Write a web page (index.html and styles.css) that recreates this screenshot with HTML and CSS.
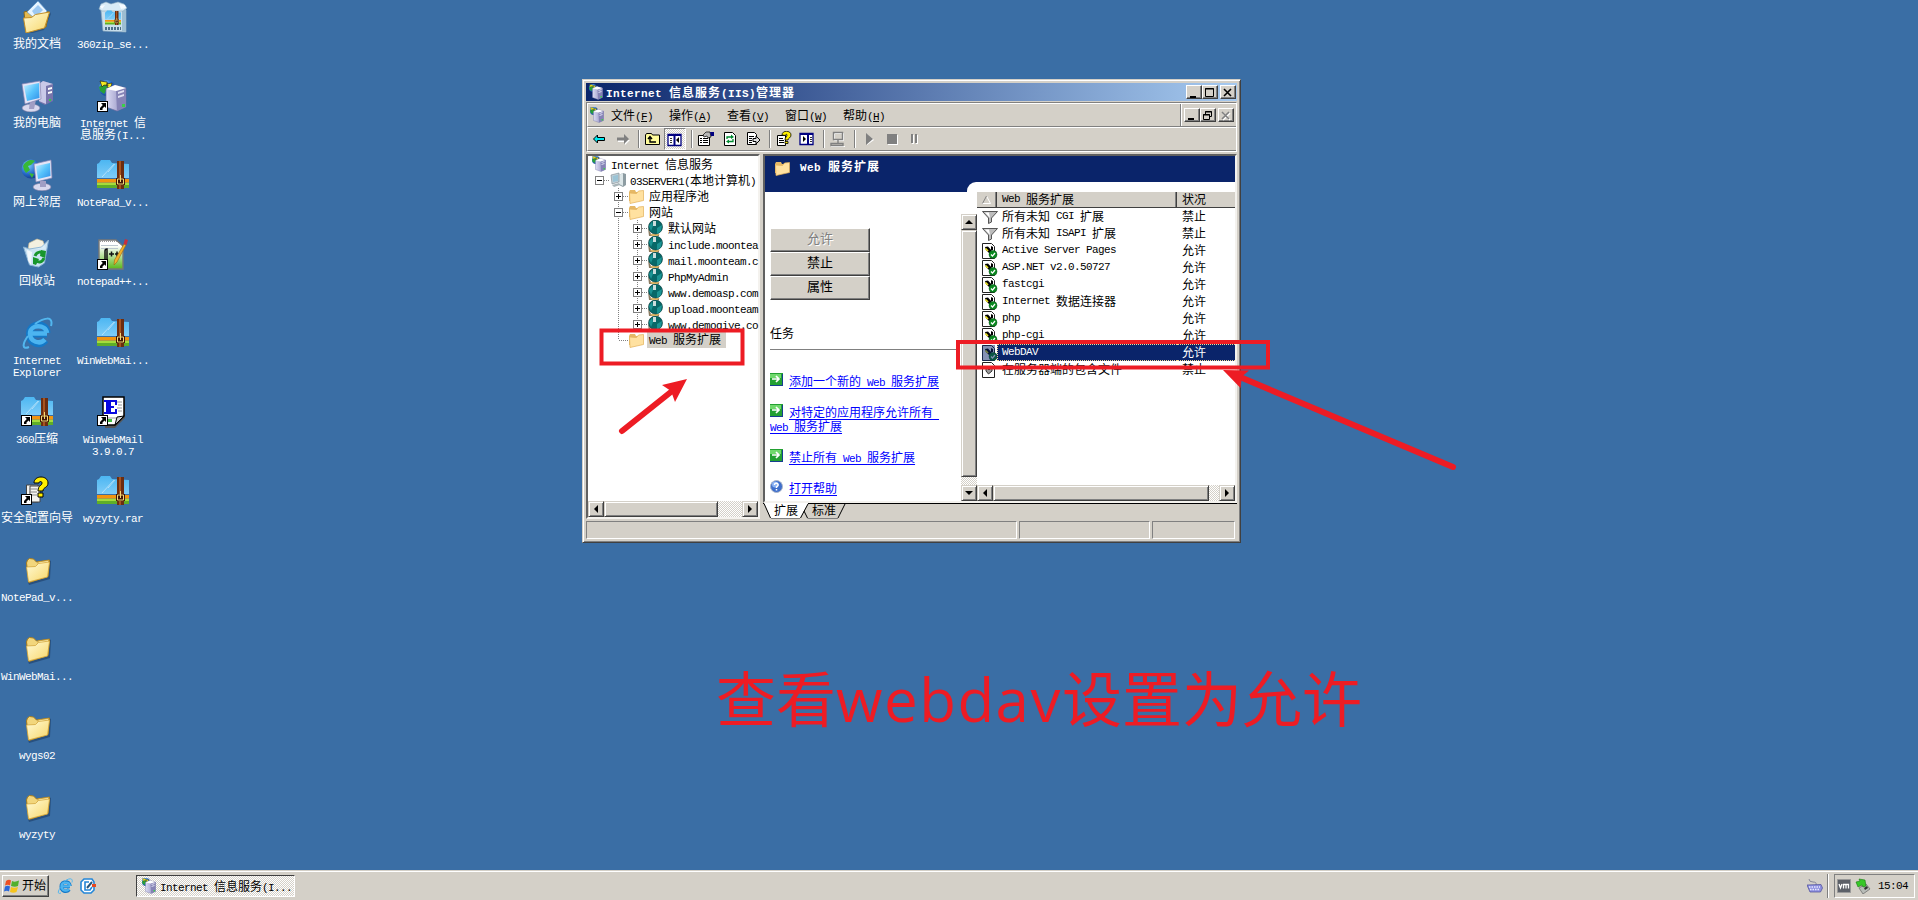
FILE: index.html
```html
<!DOCTYPE html>
<html lang="zh-CN">
<head>
<meta charset="utf-8">
<title>Internet 信息服务(IIS)管理器</title>
<link rel="stylesheet" href="styles.css">
</head>
<body>
<svg class="defs" width="0" height="0">
<defs>
<linearGradient id="gScreen" x1="0" y1="0" x2="1" y2="1"><stop offset="0" stop-color="#c8f0ff"/><stop offset=".5" stop-color="#58c4fc"/><stop offset="1" stop-color="#2f8fe8"/></linearGradient>
<linearGradient id="gFolder" x1="0" y1="0" x2="1" y2="1"><stop offset="0" stop-color="#fffbd8"/><stop offset="1" stop-color="#f8d668"/></linearGradient>
<linearGradient id="gBlue" x1="0" y1="0" x2="0" y2="1"><stop offset="0" stop-color="#4cb6f2"/><stop offset="1" stop-color="#7fcdf8"/></linearGradient>
<linearGradient id="gTower" x1="0" y1="0" x2="1" y2="0"><stop offset="0" stop-color="#dcdcf4"/><stop offset="1" stop-color="#8684b8"/></linearGradient>
<radialGradient id="gGlobe" cx=".35" cy=".3" r=".8"><stop offset="0" stop-color="#7fd0ff"/><stop offset=".6" stop-color="#2468c8"/><stop offset="1" stop-color="#10307c"/></radialGradient>
<linearGradient id="gPaper" x1="0" y1="0" x2="0" y2="1"><stop offset=".2" stop-color="#fff"/><stop offset="1" stop-color="#58b818"/></linearGradient>
<symbol id="lnk" viewBox="0 0 11 11"><path d="M0 0h11v11H0z"/><path fill="#fff" d="M1 1h9v9H1z"/><path d="M4 2h5v5L7.500 5.600 5.500 7.500V9H3V7l2.800-3z"/></symbol>
<symbol id="folder" viewBox="0 0 32 32"><path fill="#1c3c66" opacity=".6" d="M7 28l20-5 1-17 2 1-1 18L8 31z"/><path fill="#f2d67c" stroke="#a97d1c" d="M5.500 9l1-3 2-1.500 4 .5 3 3 13-2-1.500 16.500-19 6z"/><path fill="#fff2b4" stroke="#c79a34" stroke-width=".8" d="M17 8l10.500-1.500V12l-10 1z"/><path fill="url(#gFolder)" stroke="#d3a63c" stroke-width=".8" d="M5.500 13l9-.5 3-3 11-1.500-2 15-19 5z"/></symbol>
<symbol id="docs" viewBox="0 0 32 32"><path fill="#1c3c66" opacity=".5" d="M5 31l16-4 8-16 1 2-7 16-15 4z"/><path fill="#e5b94e" stroke="#8d6a18" d="M3 11l8-2 17 2-3 15-20 4z"/><path fill="#e8f5ff" stroke="#5f97cc" stroke-width=".7" d="M6 11L17 0l9 10-7 12z"/><path fill="#9cc8f2" d="M11 10l6-6 5 5-7 7z"/><path fill="url(#gFolder)" stroke="#c48f28" d="M2.500 17l8-.5 4-3 14-2.500-5 16-18.500 5z"/></symbol>
<symbol id="tower" viewBox="0 0 32 32"><path fill="url(#gTower)" stroke="#6b6aa0" stroke-width=".7" d="M9 9l9-4 11 3v19l-9 4-11-4z"/><path fill="#8583b6" d="M19 11l10-3v19l-9 4z"/><path fill="#dfdff2" d="M21 12l6-2v2l-6 2zM21 16l6-2v2l-6 2z"/><path fill="#fff" d="M9 9l9-4 11 3-10 3z"/><path fill="#3cd048" d="M25 24h3v3h-3z"/></symbol>
<symbol id="pc" viewBox="0 0 32 32"><path fill="#7775ab" d="M18 4l4-3 10 3v17l-8 4-6-3z"/><path fill="#c9c9e8" d="M18 4l4-3 10 3-7 2v18l-7-3z"/><path fill="#fff" d="M27 8l4-1v2l-4 1zM27 12l4-1v2l-4 1z"/><path fill="#3c4" d="M28 19h2v2h-2z"/><ellipse cx="10" cy="28" rx="9" ry="4" fill="#d8d8ee" stroke="#77759f" stroke-width=".6"/><path fill="#a09ec4" d="M9 20h6l-2 9H8z"/><path fill="#e4e4f6" stroke="#8583b0" stroke-width=".7" d="M1 4l18-3 1 18L4 24z"/><path fill="url(#gScreen)" d="M3 6l15-3 .5 15L6 21z"/></symbol>
<symbol id="net" viewBox="0 0 32 32"><circle cx="10" cy="10" r="9.500" fill="url(#gGlobe)"/><path fill="#38b838" d="M2 7c3-6 9-7 12-5l-4 4-3 1 2 4-4 3-2-3zM8 14l5 1-2 4z"/><ellipse cx="21" cy="28" rx="9" ry="3.800" fill="#d8d8ee" stroke="#77759f" stroke-width=".6"/><path fill="#a09ec4" d="M19 22h6v6h-6z"/><path fill="#e4e4f6" stroke="#8583b0" stroke-width=".7" d="M13 5l17-4 1 18-16 4z"/><path fill="url(#gScreen)" d="M15 7l14-3 .5 13L17 20z"/></symbol>
<symbol id="iis" viewBox="0 0 32 32"><circle cx="10" cy="8" r="8" fill="url(#gGlobe)"/><path fill="#28a038" d="M2 7l5-4 4 5-4 6-4-3z"/><path fill="#f4ec20" stroke="#222" stroke-width=".7" d="M3 1l7 1 1 4-4-1-2 2zM9 4l6-1-1 4-3 1z"/><use href="#tower"/></symbol>
<symbol id="bin" viewBox="0 0 32 32"><path fill="#f4f0e0" stroke="#c8b890" stroke-width=".6" d="M8 5l8-4 6 2 3 8H7z"/><path fill="#d6ecfa" stroke="#8fb8d8" d="M2.500 9l6 2 12-2 7-7-4 23-6 4-9-2z" opacity=".93"/><path fill="#fff" opacity=".7" d="M6 12l5 2-1 13-3-4z"/><path fill="none" stroke="#18962c" stroke-width="3" d="M14 18c2-5 7-5 9-1M23 20c-2 5-6 5-9 2"/><path fill="#18962c" d="M20 12l5 1-1 7-5-2zM12 19l6 2-3 6-3-1z"/></symbol>
<symbol id="ie" viewBox="0 0 32 32"><path fill="none" stroke="#1479c8" stroke-width="7" d="M26 17H11M24.500 23c-6 7-16 3-16-6 0-12 17-12 17.500-1"/><path fill="none" stroke="#4cb4f0" stroke-width="4.500" d="M26 16.500H11M24 22.500C19 28 9 25 9 16.500 9 7 25 7 26 16"/><path fill="none" stroke="#52b6ee" stroke-width="2" d="M7 19C1 27 1 33 8 30M14 7C22 1 33-2 30 9"/></symbol>
<symbol id="zip" viewBox="0 0 32 32"><path fill="#5fae28" d="M0 25h32v4H0z"/><path fill="#a5dc3c" d="M0 23.500h32V26H0z"/><path fill="#f29410" d="M0 20h32v3.500H0z"/><path fill="url(#gBlue)" d="M0 19V5l2-1 2-3h9l2 3 17 1v14z"/><path stroke="#fff" opacity=".45" d="M5 18L17 5M11 13l7-8"/><path fill="#6b2d10" d="M20 2h7v28h-7z"/><path fill="#a6541f" d="M22 2h2v28h-2z"/><path fill="#421707" d="M19 19h9v7h-9z"/><path fill="none" stroke="#f3d774" d="M20.500 20h6v5h-6zM23.500 16v7"/></symbol>
<symbol id="box" viewBox="0 0 32 32"><path fill="#c9dfec" stroke="#8eabc0" stroke-width=".7" d="M4 9h25v22l-23-1z"/><path fill="#9dbdd2" d="M25 9l4-1v23l-4-1z"/><path fill="#d8ebf6" stroke="#8fabc0" stroke-width=".6" d="M4 3l5-2 5 2 7-2 6 2 3 4-4 3H5L2 8z"/><path fill="#f6fbff" d="M3 5l5-1-3 4zM22 3l6 1 1 3-5 1z"/><svg x="8" y="9" width="16" height="16"><use href="#zip"/></svg><path stroke="#4d6f88" stroke-width="3" stroke-dasharray="2 1" d="M8 27.500h16"/></symbol>
<symbol id="npp" viewBox="0 0 32 32"><path fill="url(#gPaper)" stroke="#777" stroke-width="1.400" d="M2 2h17l7 6v23H2z"/><path stroke="#999" stroke-dasharray="1 1" d="M3 3.500h17"/><path stroke="#bcc8d0" d="M4 7.500h17M4 10.500h17"/><path fill="none" stroke="#111" stroke-width="1.500" d="M8 21v-8q0-2 2-2v10M12 16h5M14.500 13.500v5M18 16h4M20 13.500v5"/><path fill="#f1b02c" stroke="#9a6710" stroke-width=".6" d="M27 6l2 1-9 17-3 3 .5-5z"/><path fill="#c8303c" d="M28 1l3 1-1.500 5-3-1z"/></symbol>
<symbol id="mail" viewBox="0 0 32 32"><path fill="#555" d="M8 3h20v19L18 32H8z"/><path fill="#fff" stroke="#000" stroke-width="1.500" d="M6 1h21v19l-9 9H6z"/><path fill="#ccc" stroke="#000" d="M18 29l2-8 7-1z"/><path fill="#0808e0" d="M7 4h13v5h-2V6h-4v4h3v2h-3v4h4v-3h2v5H7v-2h2V6H7z"/><path stroke="#999" d="M20 6h5M21 9h4M20 12h5M21 15h4M9 22h10"/><path fill="#4b4" d="M10 23h5v3h-5z"/></symbol>
<symbol id="wizard" viewBox="0 0 32 32"><path fill="#f4f4f0" stroke="#444" d="M5.500 10H17v17H5.500z"/><path fill="#f4f4f0" stroke="#444" d="M9 11h10v16H9z"/><path stroke="#888" d="M8 14h8M8 17h8M8 20h8"/><path fill="#ffef00" stroke="#000" d="M13 8c0-8 14-8 14 0 0 5-5 4-5 8h-5c0-6 4-5 4-8 0-2-3-2-3 0zM17 18h5v4h-5z"/></symbol>
<symbol id="sf" viewBox="0 0 16 16"><path fill="#e5b866" d="M1 4l1-2h5l1 2h6v9H1z"/><path fill="#ffe1a0" stroke="#e2b058" stroke-width=".7" d="M1.500 5l7 .5 2-2.500 5-.500v10L2 15.500z"/></symbol>
<symbol id="globe" viewBox="0 0 16 16"><path fill="#8a7a60" d="M1 8l3 6h8v2H2z"/><path fill="#e0b868" d="M3 14h10l-3 2H5z"/><circle cx="8.500" cy="7" r="7" fill="#086868" stroke="#033" stroke-width=".6"/><path fill="#1c9494" d="M2 6l3-4 1 4-2 5zM10 8l5-3-1 6-4 3z"/><path fill="#cdd" d="M6 1h3v5H6z"/></symbol>
<symbol id="srv" viewBox="0 0 16 16"><path fill="#8d9ca2" d="M9 3l4-2 3 1v11l-3 2-4-2z"/><path fill="#dce6e8" d="M9 3l4-2v13l-4-2z"/><path fill="#c5d0d6" stroke="#76868e" stroke-width=".6" d="M1 3l8-2v9l-7 2z"/><path fill="#9bc4d6" d="M2.500 4L8 2.800V9L3 10z"/><path fill="#a8b4b8" d="M2 13l7-2 1 2-6 2z"/></symbol>
<symbol id="funnel" viewBox="0 0 16 16"><path fill="#bcbcbc" stroke="#555" d="M.5 2.500h15L9.500 9v4l-3 1.500V9z"/><path fill="#fff" d="M3 3.500h4L8 9z"/></symbol>
<symbol id="ext" viewBox="0 0 16 16"><path fill="#fff" stroke="#222" d="M.5.500h9l3 3v12H.5z"/><path d="M3 4l3-.5L11 9l-2 3-5-5z"/><path d="M9 3l2 1v3H9z"/><path stroke="#e8e020" stroke-width="1.700" d="M3.500 5.500L6 8"/><circle cx="11" cy="11.500" r="4" fill="#0a8a20" stroke="#054a10" stroke-width=".5"/><path fill="none" stroke="#fff" stroke-width="1.300" d="M9 11.500l1.500 1.600L13 10"/></symbol>
<symbol id="page" viewBox="0 0 16 16"><path fill="#fff" stroke="#222" d="M.5.500h9l3 3v12H.5z"/><path fill="#999" stroke="#333" d="M4 5v4l2.500 3L10 9V5L7 8z"/></symbol>
<symbol id="go" viewBox="0 0 13 13"><path fill="#23a032" d="M0 0h13v12H0z"/><path fill="#6fd86c" d="M0 1h11v4H0z"/><path stroke="#173f90" d="M0 12.500h13M12.500 1v11"/><path fill="none" stroke="#fff" stroke-width="1.700" d="M2 6h7M6 3l3 3-3 3"/></symbol>
<symbol id="hlp" viewBox="0 0 13 13"><circle cx="6.500" cy="6.500" r="6" fill="#3f6fcc" stroke="#aab4c8"/><circle cx="5" cy="4.500" r="3" fill="#8db4f4"/><path fill="none" stroke="#fff" stroke-width="1.500" d="M4.500 5c0-3 4.500-2 3.500.5L6.500 7v1M6.500 9v1.500"/></symbol>
<symbol id="flag" viewBox="0 0 16 16"><path fill="#ee5022" d="M2 3q3-2 5-.5L6 7.500Q4 6 1 7.500z"/><path fill="#52b02c" d="M8 3q3 1.500 7-.5L14 8q-3 1.500-7 0z"/><path fill="#2c68d8" d="M1 8.500q3-1.500 5 0l-1 5q-2-1.500-5 0z"/><path fill="#f6c41c" d="M7 9q3 1.500 7 0l-1.500 5q-3 1.500-6.500 0z"/></symbol>
</defs>
</svg>

<main class="desktop">
  <div class="icons">
    <div class="icon-col">
      <div class="shortcut"><svg><use href="#docs"/></svg><span>我的文档</span></div>
      <div class="shortcut"><svg><use href="#pc"/></svg><span>我的电脑</span></div>
      <div class="shortcut"><svg><use href="#net"/></svg><span>网上邻居</span></div>
      <div class="shortcut"><svg><use href="#bin"/></svg><span>回收站</span></div>
      <div class="shortcut"><svg><use href="#ie"/></svg><span><b class="a">Internet<br>Explorer</b></span></div>
      <div class="shortcut"><svg><use href="#zip"/><use href="#lnk" y="19" width="11" height="11"/></svg><span><b class="a">360</b>压缩</span></div>
      <div class="shortcut"><svg><use href="#wizard"/><use href="#lnk" y="19" width="11" height="11"/></svg><span>安全配置向导</span></div>
      <div class="shortcut"><svg><use href="#folder"/></svg><span><b class="a">NotePad_v...</b></span></div>
      <div class="shortcut"><svg><use href="#folder"/></svg><span><b class="a">WinWebMai...</b></span></div>
      <div class="shortcut"><svg><use href="#folder"/></svg><span><b class="a">wygs02</b></span></div>
      <div class="shortcut"><svg><use href="#folder"/></svg><span><b class="a">wyzyty</b></span></div>
    </div>
    <div class="icon-col">
      <div class="shortcut"><svg><use href="#box"/></svg><span><b class="a">360zip_se...</b></span></div>
      <div class="shortcut"><svg><use href="#iis"/><use href="#lnk" y="21" width="11" height="11"/></svg><span><b class="a">Internet </b>信<br>息服务<b class="a">(I...</b></span></div>
      <div class="shortcut"><svg><use href="#zip"/></svg><span><b class="a">NotePad_v...</b></span></div>
      <div class="shortcut"><svg><use href="#npp"/><use href="#lnk" y="21" width="11" height="11"/></svg><span><b class="a">notepad++...</b></span></div>
      <div class="shortcut"><svg><use href="#zip"/></svg><span><b class="a">WinWebMai...</b></span></div>
      <div class="shortcut"><svg><use href="#mail"/><use href="#lnk" y="19" width="11" height="11"/></svg><span><b class="a">WinWebMail<br>3.9.0.7</b></span></div>
      <div class="shortcut"><svg><use href="#zip"/></svg><span><b class="a">wyzyty.rar</b></span></div>
    </div>
  </div>

  <section class="window">
    <header class="titlebar">
      <svg class="i16"><use href="#iis"/></svg>
      <h1><b class="a">Internet </b>信息服务<b class="a">(IIS)</b>管理器</h1>
      <div class="winbtns">
        <button><svg><path d="M3 10h6v2H3z"/></svg></button>
        <button><svg><path fill="none" stroke="#000" d="M2.500 2.500h8v8h-8zM2 3h9"/></svg></button>
        <button class="close"><svg><path stroke="#000" stroke-width="1.600" d="M3 3l7 7M10 3l-7 7"/></svg></button>
      </div>
    </header>
    <div class="bars">
      <nav class="menubar">
        <svg class="i16"><use href="#iis"/></svg>
        <span>文件<b class="a">(<u>F</u>)</b></span><span>操作<b class="a">(<u>A</u>)</b></span><span>查看<b class="a">(<u>V</u>)</b></span><span>窗口<b class="a">(<u>W</u>)</b></span><span>帮助<b class="a">(<u>H</u>)</b></span>
        <div class="winbtns mdi">
          <button><svg><path d="M3 9h6v2H3z"/></svg></button>
          <button><svg><path fill="none" stroke="#000" d="M4.500 6V2.500h6v5H8M2.500 5.500h6v5h-6zM4 3h7M2 6h7"/></svg></button>
          <button class="close"><svg><path stroke="#fff" stroke-width="1.600" d="M4 4l7 7M11 4l-7 7"/><path stroke="#808080" stroke-width="1.600" d="M3 3l7 7M10 3l-7 7"/></svg></button>
        </div>
      </nav>
      <div class="toolbar">
        <svg class="tool back" viewBox="0 0 16 16"><path fill="#00e8f0" stroke="#000" d="M1.500 8l4-4v2.500h7v3h-7V12z"/></svg>
        <svg class="tool" viewBox="0 0 16 16"><path fill="#fff" d="M15 9l-5 5v-3H3V9z"/><path fill="#808080" d="M14 8L9 3v3.500H2v3h7V13z"/></svg>
        <i class="sep first"></i>
        <svg class="tool" viewBox="0 0 16 16"><path fill="#fffb9a" stroke="#000" d="M.5 13.500V4l1-1.500h5l1 1.500h7v9.500z"/><path fill="none" stroke="#000" stroke-width="1.400" d="M5 9V6M3 8l2-2.500L7 8M5 8v3h6"/></svg>
        <span class="pressed"><svg class="tool" viewBox="0 0 16 16"><path fill="#fff" stroke="#000080" stroke-width="1.300" d="M1 2.500h13v11H1z"/><path stroke="#000080" stroke-width="2" d="M1 3h13M7.500 3v10"/><path stroke="#333" d="M3 6.500h2M3 8.500h2M3 10.500h2"/><path d="M12 5v6L9 8z"/></svg></span>
        <i class="sep"></i>
        <svg class="tool" viewBox="0 0 16 16"><path fill="#fff" stroke="#000" d="M.5 4.500h11v10H.5z"/><path stroke="#000" d="M2 7.500h2M5 7.500h5M2 9.500h2M5 9.500h5M2 11.500h2M5 11.500h5"/><path fill="#b8b8b8" stroke="#000" stroke-width=".7" d="M5 4l3-3h4l1 5-3 1-1-2-3 1z"/><path fill="#000080" d="M12 1h4v4h-3z"/></svg>
        <svg class="tool g8" viewBox="0 0 16 16"><path fill="#fff" stroke="#000" d="M2.500 1.500h8l3 3v10h-11z"/><path fill="none" stroke="#008a30" stroke-width="1.300" d="M5 8V6h5M11 8v2.500H6"/><path fill="#008a30" d="M9 3.500l3 2.500-3 2zM7 8.500v4L4 10.500z"/></svg>
        <svg class="tool g7" viewBox="0 0 16 16"><path fill="#fff" stroke="#000" d="M2.500 1.500h7l2 2v10h-9z"/><path stroke="#000" d="M4 5.500h5M4 7.500h3M4 9.500h3M4 11.500h3"/><path fill="#ddd" stroke="#000" d="M8 7.500h3V5l4 4-4 4v-2.500H8z"/></svg>
        <i class="sep"></i>
        <svg class="tool" viewBox="0 0 16 16"><path fill="#fff" stroke="#000" d="M1.500 4.500h8v10h-8z"/><path stroke="#000" d="M3 7.500h4M3 9.500h5M3 11.500h5"/><path fill="#ffef00" stroke="#000" stroke-width=".8" d="M6 4c0-5 9-5 9 0 0 3-3 3-3 5H9c0-3 2-3 2-5 0-1-1.500-1-1.500.500zM9 10.500h3v2H9z"/></svg>
        <svg class="tool g7" viewBox="0 0 16 16"><path fill="#fff" stroke="#000080" stroke-width="1.300" d="M1 2.500h13v11H1z"/><path stroke="#000080" stroke-width="2" d="M1 3h13M9 3v10"/><path stroke="#333" d="M11 6.500h2M11 8.500h2M11 10.500h2"/><path d="M4 5v6l3-3z"/></svg>
        <i class="sep"></i>
        <svg class="tool" viewBox="0 0 16 16"><path fill="none" stroke="#fff" d="M4.500 2.500h9v7h-9zM1 15.500h14"/><path fill="none" stroke="#808080" stroke-width="1.400" d="M3.500 1.500h9v7h-9zM1 12.500h12v2H1zM8 9v3"/></svg>
        <i class="sep"></i>
        <svg class="tool" viewBox="0 0 16 16"><path fill="#fff" d="M6 3l7 6-7 5z"/><path fill="#808080" d="M5 2l7 6-7 6z"/></svg>
        <svg class="tool g7" viewBox="0 0 16 16"><path fill="#fff" d="M4 4h10v10H4z"/><path fill="#808080" d="M3 3h10v10H3z"/></svg>
        <svg class="tool g6" viewBox="0 0 16 16"><path fill="#fff" d="M6 4h2v9H6zM10 4h2v9h-2z"/><path fill="#808080" d="M5 3h2v9H5zM9 3h2v9H9z"/></svg>
      </div>
    </div>

    <div class="panes">
      <aside class="treepane">
        <div class="tree">
          <div class="node root"><svg class="i16"><use href="#iis"/></svg><span><b class="a">Internet </b>信息服务</span></div>
          <div class="node l1"><i class="box minus"></i><i class="dots"></i><svg class="i16"><use href="#srv"/></svg><span><b class="a">03SERVER1(</b>本地计算机<b class="a">)</b></span></div>
          <div class="branch b2">
            <div class="node l2"><i class="box plus"></i><i class="dots"></i><svg class="i16"><use href="#sf"/></svg><span>应用程序池</span></div>
            <div class="node l2"><i class="box minus"></i><i class="dots"></i><svg class="i16"><use href="#sf"/></svg><span>网站</span></div>
            <div class="branch b3">
              <div class="node l3"><i class="box plus"></i><i class="dots"></i><svg class="i16"><use href="#globe"/></svg><span>默认网站</span></div>
              <div class="node l3"><i class="box plus"></i><i class="dots"></i><svg class="i16"><use href="#globe"/></svg><span><b class="a">include.moontea</b></span></div>
              <div class="node l3"><i class="box plus"></i><i class="dots"></i><svg class="i16"><use href="#globe"/></svg><span><b class="a">mail.moonteam.c</b></span></div>
              <div class="node l3"><i class="box plus"></i><i class="dots"></i><svg class="i16"><use href="#globe"/></svg><span><b class="a">PhpMyAdmin</b></span></div>
              <div class="node l3"><i class="box plus"></i><i class="dots"></i><svg class="i16"><use href="#globe"/></svg><span><b class="a">www.demoasp.com</b></span></div>
              <div class="node l3"><i class="box plus"></i><i class="dots"></i><svg class="i16"><use href="#globe"/></svg><span><b class="a">upload.moonteam</b></span></div>
              <div class="node l3"><i class="box plus"></i><i class="dots"></i><svg class="i16"><use href="#globe"/></svg><span><b class="a">www.demoqiye.co</b></span></div>
            </div>
            <div class="node l2"><i class="dots long"></i><svg class="i16"><use href="#sf"/></svg><span class="picked"><b class="a">Web </b>服务扩展</span></div>
          </div>
        </div>
        <div class="hscroll">
          <i class="sb left"></i><i class="thumb"></i><i class="rest"></i><i class="sb right"></i>
        </div>
      </aside>

      <div class="rightside">
        <div class="detail">
          <div class="banner"><svg class="i16"><use href="#sf"/></svg><h2><b class="a">Web </b>服务扩展</h2></div>
          <div class="columns">
            <div class="taskcol">
              <div class="strip"><i></i></div>
              <div class="taskrow">
                <div class="tasks">
                  <button class="act off">允许</button>
                  <button class="act">禁止</button>
                  <button class="act">属性</button>
                  <h3>任务</h3>
                  <p><svg><use href="#go"/></svg><a>添加一个新的<b class="a"> Web </b>服务扩展</a></p>
                  <p><svg><use href="#go"/></svg><a>对特定的应用程序允许所有<b class="a">&nbsp;</b><br><b class="a">Web </b>服务扩展</a></p>
                  <p><svg><use href="#go"/></svg><a>禁止所有<b class="a"> Web </b>服务扩展</a></p>
                  <p><svg><use href="#hlp"/></svg><a>打开帮助</a></p>
                </div>
                <div class="vscroll"><i class="sb up"></i><i class="thumb"></i><i class="rest"></i><i class="sb down"></i></div>
              </div>
            </div>
            <div class="listcol">
              <div class="spacer"></div>
              <div class="row head"><span class="c0"><svg viewBox="0 0 9 8"><path fill="none" stroke="#fff" d="M4.500 0L8.500 7.500H0"/><path fill="none" stroke="#808080" d="M.5 7.500L4.500 0"/></svg></span><span class="c1"><b class="a">Web </b>服务扩展</span><span class="c2">状况</span></div>
              <div class="list">
                <div class="row"><span class="c0"><svg><use href="#funnel"/></svg></span><span class="c1">所有未知<b class="a"> CGI </b>扩展</span><span class="c2">禁止</span></div>
                <div class="row"><span class="c0"><svg><use href="#funnel"/></svg></span><span class="c1">所有未知<b class="a"> ISAPI </b>扩展</span><span class="c2">禁止</span></div>
                <div class="row"><span class="c0"><svg><use href="#ext"/></svg></span><span class="c1"><b class="a">Active Server Pages</b></span><span class="c2">允许</span></div>
                <div class="row"><span class="c0"><svg><use href="#ext"/></svg></span><span class="c1"><b class="a">ASP.NET v2.0.50727</b></span><span class="c2">允许</span></div>
                <div class="row"><span class="c0"><svg><use href="#ext"/></svg></span><span class="c1"><b class="a">fastcgi</b></span><span class="c2">允许</span></div>
                <div class="row"><span class="c0"><svg><use href="#ext"/></svg></span><span class="c1"><b class="a">Internet </b>数据连接器</span><span class="c2">允许</span></div>
                <div class="row"><span class="c0"><svg><use href="#ext"/></svg></span><span class="c1"><b class="a">php</b></span><span class="c2">允许</span></div>
                <div class="row"><span class="c0"><svg><use href="#ext"/></svg></span><span class="c1"><b class="a">php-cgi</b></span><span class="c2">允许</span></div>
                <div class="row selected"><span class="c0"><svg><use href="#ext"/><path fill="#0a246a" opacity=".5" d="M0 0h13v16H0zM13 9h3v5h-3z"/></svg></span><span class="c1"><b class="a">WebDAV</b></span><span class="c2">允许</span></div>
                <div class="row"><span class="c0"><svg><use href="#page"/></svg></span><span class="c1">在服务器端的包含文件</span><span class="c2">禁止</span></div>
              </div>
              <div class="hscroll wide"><i class="sb left"></i><i class="thumb"></i><i class="rest"></i><i class="sb right"></i></div>
            </div>
          </div>
        </div>
        <div class="tabs">
          <svg class="tabshape" viewBox="0 0 474 16"><path fill="#fff" d="M1 0l7 15h29L45 0z"/><path stroke="#000" d="M45 .5h429"/><path fill="none" stroke="#000" d="M0 .5h1l6.500 14.500M37.500 15L45 1"/><path fill="none" stroke="#000" d="M41 8l3.500 7M75 15L82 1"/><path stroke="#808080" d="M8 15.500h29M44.500 15.500H75"/></svg>
          <span>扩展</span><span>标准</span>
        </div>
      </div>
    </div>
    <footer class="status"><i></i><i></i><i></i></footer>
  </section>

  <p class="caption">查看<span>webdav</span>设置为允许</p>
  <svg class="marks" viewBox="0 0 1918 870">
    <g fill="none" stroke="#ed1c24" stroke-width="4"><rect x="601.500" y="330.500" width="141" height="33"/><rect x="958" y="342" width="310" height="25.500"/></g>
    <g stroke="#ed1c24" stroke-width="6" stroke-linecap="round"><path d="M622 431L674 389.500"/><path d="M1240 377L1453 467"/></g>
    <path fill="#ed1c24" d="M687 379l-25 6 9 6 4 11zM1223 370l26 .5-7 6-1.500 11.500z"/>
  </svg>
</main>

<footer class="taskbar">
  <button class="start"><svg class="i16"><use href="#flag"/></svg><span>开始</span></button>
  <svg class="quick"><use href="#ie"/></svg>
  <svg class="quick" viewBox="0 0 16 16"><path fill="#fff" stroke="#2486d8" stroke-width="1.600" d="M1 4l3-3h8l2 3v8l-3 3H4l-3-3z"/><path fill="none" stroke="#2486d8" stroke-width="1.600" d="M9 4H5v8h5l2-3"/><path stroke="#26567c" stroke-width="2" d="M7 10l5-6"/><path fill="#e84820" d="M12 6h4v3h-4z"/></svg>
  <div class="task"><svg class="i16"><use href="#iis"/></svg><span><b class="a">Internet </b>信息服务<b class="a">(I...</b></span></div>
  <div class="grow"></div>
  <svg class="kbd" viewBox="0 0 16 16"><path fill="none" stroke="#889" d="M2 1q0 3 4 3t3 3"/><path fill="#8f91e0" stroke="#4a4c98" stroke-width=".7" d="M0 7l14-.5 1.500 3.500-2 4H3z"/><path stroke="#e8e8ff" stroke-dasharray="1.500 1" stroke-width="1.300" d="M2 9h11M3 11.500h10"/></svg>
  <i class="traysep"></i>
  <div class="tray">
    <svg class="vm" viewBox="0 0 14 14"><path fill="#5c6068" stroke="#999" d="M.5.500h13v13H.5z"/><path fill="none" stroke="#fff" stroke-width="1.300" d="M2 5l1.500 4L5 5M6.500 9.500V5.500h5v4M9 5.500v4"/></svg>
    <svg class="i16" viewBox="0 0 16 16"><path fill="#b8bcb8" stroke="#666" stroke-width=".7" d="M4 10l7-4 4 5-7 5z"/><path fill="#333" d="M9 10l3-2 1 2-3 2z"/><path fill="#38c828" stroke="#187810" stroke-width=".6" d="M1 4l4-1-1-2 6 1 1 6-3 1-1-2-4 2z"/></svg>
    <b class="a">15:04</b>
  </div>
</footer>
</body>
</html>
```
FILE: styles.css
```css
* { box-sizing: border-box; }
body {
  margin: 0;
  width: 1918px;
  height: 900px;
  overflow: hidden;
  background: #3a6ea5;
  color: #000;
  font: 12px/12px "Noto Sans CJK SC", sans-serif;
  display: flex;
  flex-direction: column;
}
h1, h2, h3, p { margin: 0; font-size: 12px; font-weight: normal; }
svg { flex: none; display: block; }
i { font-style: normal; }
.defs { position: absolute; }
.a {
  font-family: "Liberation Mono", monospace;
  font-size: 11px;
  line-height: 0;
  font-weight: normal;
  letter-spacing: -.6px;
  white-space: pre;
}
.i16 { width: 16px; height: 16px; }
button { font: inherit; padding: 0; margin: 0; color: #000; }

.desktop { position: relative; height: 870px; flex: none; }
.icons { display: flex; width: 152px; }
.icon-col { width: 76px; }
.shortcut {
  height: 79px;
  padding: 1px 2px 0 0;
  display: flex;
  flex-direction: column;
  align-items: center;
  gap: 4px;
  color: #fff;
  text-align: center;
  white-space: nowrap;
}
.shortcut svg { width: 32px; height: 32px; }

/* window frame */
.window {
  position: absolute;
  left: 582px;
  top: 79px;
  width: 659px;
  height: 464px;
  padding: 3px;
  background: #d4d0c8;
  border: 1px solid;
  border-color: #d4d0c8 #404040 #404040 #d4d0c8;
  box-shadow: inset 1px 1px #fff, inset -1px -1px #808080;
  display: flex;
  flex-direction: column;
}
.titlebar {
  height: 18px;
  flex: none;
  display: flex;
  align-items: center;
  padding: 0 1px 0 2px;
  background: linear-gradient(90deg, #0a246a, #a6caf0);
  color: #fff;
}
h1, h2 { font-weight: bold; letter-spacing: 1px; white-space: nowrap; }
h1 { margin-left: 2px; flex: 1; }
h1 .a, h2 .a { font-weight: bold; letter-spacing: .4px; }
.winbtns { display: flex; }
.winbtns button {
  width: 16px;
  height: 14px;
  background: #d4d0c8;
  border: 1px solid;
  border-color: #fff #404040 #404040 #fff;
  box-shadow: inset -1px -1px #808080;
}
.winbtns svg { width: 14px; height: 12px; }
.winbtns .close { margin-left: 2px; }
.bars {
  height: 50px;
  margin-top: 1px;
  flex: none;
  border: 1px solid #808080;
  border-right-color: #fff;
  border-bottom-color: #fff;
}
.menubar {
  height: 24px;
  display: flex;
  align-items: center;
  padding-left: 1px;
  border-top: 1px solid #fff;
  border-left: 1px solid #fff;
  border-bottom: 1px solid #808080;
}
.menubar > span { margin: 0 10px 0 6px; width: 42px; white-space: nowrap; }
.menubar .mdi {
  margin-left: auto;
  height: 22px;
  padding: 4px 2px 0 3px;
  border-left: 1px solid #808080;
  box-shadow: inset 1px 0 #fff;
}
.toolbar {
  height: 24px;
  display: flex;
  align-items: center;
  padding-left: 4px;
  border-top: 1px solid #fff;
  border-left: 1px solid #fff;
  border-bottom: 1px solid #808080;
}
.tool { width: 16px; height: 16px; flex: none; }
.back { margin-right: 7px; }
.sep { width: 2px; height: 18px; margin: 0 5px 0 8px; background: linear-gradient(90deg, #808080 50%, #fff 50%); }
.sep.first { margin-left: 7px; }
.pressed {
  width: 22px;
  height: 22px;
  padding: 3px 2px;
  margin: 0 -3px 0 3px;
  border: 1px solid;
  border-color: #808080 #fff #fff #808080;
}
.pressed, .rest, .task {
  background-image: repeating-conic-gradient(#fff 0 25%, #d4d0c8 0 50%);
  background-size: 2px 2px;
}
.g8 { margin-left: 8px; }
.g7 { margin-left: 7px; }
.g6 { margin-left: 6px; }

/* panes */
.panes { display: flex; gap: 3px; margin-top: 2px; height: 365px; flex: none; }
.treepane, .detail {
  border: 2px solid;
  border-color: #606060 #f4f2ee #f4f2ee #606060;
  background: #fff;
}
.treepane { width: 174px; display: flex; flex-direction: column; }
.tree { flex: 1; }
.node { height: 16px; display: flex; align-items: center; white-space: nowrap; }
.node span { padding: 0 0 1px 4px; }
.root { padding-left: 3px; }
.l1 { padding-left: 7px; }
.l2 { padding-left: 26px; }
.l3 { padding-left: 45px; }
.l2 span, .l3 span { padding-left: 5px; }
.l2 .dots, .l3 .dots { width: 5px; }
.branch {
  background-image: repeating-linear-gradient(#808080 0 1px, transparent 1px 2px);
  background-repeat: no-repeat;
}
.b2 { background-size: 1px calc(100% - 8px); background-position: 30px 0; }
.b3 { background-size: 1px 100%; background-position: 49px 0; }
.box {
  width: 9px;
  height: 9px;
  flex: none;
  border: 1px solid #808080;
  background: linear-gradient(#000, #000) center / 5px 1px no-repeat #fff;
}
.plus { background: linear-gradient(#000, #000) center / 5px 1px no-repeat, linear-gradient(#000, #000) center / 1px 5px no-repeat #fff; }
.dots { width: 6px; height: 1px; flex: none; background: repeating-linear-gradient(90deg, #808080 0 1px, transparent 1px 2px); }
.l2 .dots.long { width: 9px; margin-left: 5px; }
.node .picked { background: #d4d0c8; height: 16px; line-height: 14px; padding: 0 5px 0 2px; margin-left: 3px; }

/* scrollbars */
.hscroll { display: flex; height: 16px; flex: none; }
.sb, .thumb {
  background: #d4d0c8;
  border: 1px solid;
  border-color: #d4d0c8 #404040 #404040 #d4d0c8;
  box-shadow: inset 1px 1px #fff, inset -1px -1px #808080;
}
.sb { width: 16px; height: 16px; flex: none; display: grid; place-items: center; }
.sb::before { content: ""; border: 4px solid transparent; }
.left::before { border-right-color: #000; border-left-width: 0; }
.right::before { border-left-color: #000; border-right-width: 0; }
.up::before { border-bottom-color: #000; border-top-width: 0; }
.down::before { border-top-color: #000; border-bottom-width: 0; }
.hscroll .thumb { width: 114px; }
.hscroll .rest { flex: 1; }
.wide .thumb { width: 216px; }
.vscroll { width: 16px; margin-top: 22px; height: 287px; display: flex; flex-direction: column; }
.vscroll .thumb { height: 247px; }
.vscroll .rest { flex: 1; }

.rightside { flex: 1; display: flex; flex-direction: column; }
.detail { height: 349px; }
.banner { height: 26px; background: #0a246a; color: #fff; display: flex; padding: 4px 0 0 9px; }
.banner h2 { margin: 0 0 0 10px; }
.columns { display: flex; }
.taskcol { width: 212px; }
.strip { height: 10px; background: #0a246a; display: flex; justify-content: flex-end; }
.strip i { width: 10px; background: #fff; border-top-left-radius: 9px; }
.taskrow { display: flex; }
.tasks { width: 196px; padding: 36px 5px 0; }
.act {
  display: block;
  width: 100px;
  height: 24px;
  padding-bottom: 5px;
  font-size: 13px;
  background: #d4d0c8;
  border: 1px solid;
  border-color: #fff #404040 #404040 #fff;
  box-shadow: inset -1px -1px #808080;
}
.act.off { color: #808080; text-shadow: 1px 1px #fff; }
.tasks h3 { margin: 27px 0 24px; border-bottom: 1px solid #808080; width: 187px; height: 23px; }
.tasks p { line-height: 14px; margin-bottom: 17px; white-space: nowrap; }
.tasks p svg { display: inline-block; width: 13px; height: 13px; margin: -4px 6px 0 0; vertical-align: 0; }
.tasks a { color: #00f; text-decoration: underline; text-underline-offset: 2px; text-decoration-skip-ink: none; }
.listcol { flex: 1; height: 319px; display: flex; flex-direction: column; }
.spacer { height: 10px; }
.list { flex: 1; }
.row { display: flex; height: 17px; align-items: center; white-space: nowrap; }
.row > span { height: 100%; display: flex; align-items: center; }
.row > .c1, .row > .c2 { padding-bottom: 2px; }
.c0 { width: 20px; padding-left: 5px; }
.c0 svg { width: 16px; height: 16px; margin-right: -2px; }
.c1 { width: 180px; padding-left: 5px; }
.c2 { flex: 1; padding-left: 5px; }
.head { height: 16px; background: #d4d0c8; border-bottom: 1px solid #404040; }
.head .c0, .head .c1 { border-right: 1px solid #404040; box-shadow: inset -1px 0 #808080; }
.head .c0 svg { width: 9px; height: 8px; }
.selected .c1, .selected .c2 { background: #0a246a; color: #fff; border: 1px dotted #f5db95; border-width: 1px 0; }
.selected .c1 { border-left-width: 1px; padding-left: 4px; }

.tabs { position: relative; height: 16px; display: flex; gap: 14px; padding: 1px 0 0 11px; }
.tabs span { position: relative; }
.tabshape { position: absolute; left: 0; top: 0; width: 474px; height: 16px; }
.status { display: flex; gap: 2px; margin-top: 2px; height: 18px; }
.status i { border: 1px solid; border-color: #808080 #fff #fff #808080; width: 131px; }
.status i:first-child { width: 431px; }
.status i:last-child { width: 83px; }

/* annotations over the desktop */
.caption {
  position: absolute;
  left: 716px;
  top: 661px;
  font-size: 60px;
  line-height: 70px;
  color: #ed1c24;
  white-space: nowrap;
}
.caption span { font-family: "Open Sans", sans-serif; letter-spacing: 1.5px; }
.marks { position: absolute; left: 0; top: 0; width: 1918px; height: 870px; }

/* taskbar */
.taskbar {
  height: 30px;
  display: flex;
  align-items: center;
  padding: 2px 3px 0 2px;
  background: #d4d0c8;
  box-shadow: inset 0 1px #d4d0c8, inset 0 2px #fff;
}
.start {
  width: 47px;
  height: 22px;
  display: flex;
  align-items: center;
  gap: 2px;
  padding-left: 1px;
  white-space: nowrap;
  background: #d4d0c8;
  border: 1px solid;
  border-color: #fff #404040 #404040 #fff;
  box-shadow: inset -1px -1px #808080;
}
.start span { padding-bottom: 3px; }
.quick { width: 16px; height: 16px; margin-left: 7px; }
.start + .quick { margin-left: 8px; }
.task {
  width: 159px;
  height: 22px;
  margin-left: 40px;
  display: flex;
  align-items: center;
  gap: 3px;
  padding-left: 4px;
  white-space: nowrap;
  border: 1px solid;
  border-color: #404040 #fff #fff #404040;
}
.grow { flex: 1; }
.kbd { width: 16px; height: 16px; }
.traysep { width: 2px; height: 24px; margin: 0 5px 0 4px; background: linear-gradient(90deg, #808080 50%, #fff 50%); }
.tray {
  width: 81px;
  height: 24px;
  display: flex;
  align-items: center;
  gap: 4px;
  padding-left: 2px;
  border: 1px solid;
  border-color: #808080 #fff #fff #808080;
}
.vm { width: 14px; height: 14px; }
.tray .a { margin-left: 3px; }
```
